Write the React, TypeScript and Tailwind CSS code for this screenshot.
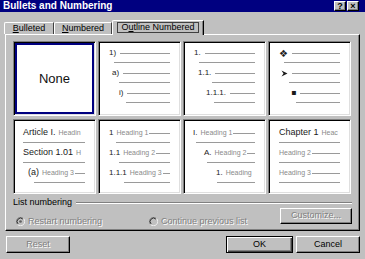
import type { ReactNode } from "react";

type Level = {
  label: ReactNode;
  heading?: string;
  cut?: boolean;
  pad: string;
  sub: string;
};

const raised =
  "border border-t-white border-l-white border-r-black border-b-black shadow-[inset_-1px_-1px_0_#808080]";
const sunken =
  "border border-t-[#808080] border-l-[#808080] border-r-white border-b-white shadow-[inset_1px_1px_0_#000,inset_-1px_-1px_0_#dfdfdf]";
const disabledText = "text-[#808080] [text-shadow:1px_1px_0_#fff]";

const arrowBullet = (
  <svg width="7" height="7" viewBox="0 0 7 7" className="block">
    <path d="M0.5 0.5 L6.5 3.5 L0.5 6.5 L2.5 3.5 Z" fill="#1a1a1a" />
  </svg>
);

const simpleCells: Level[][] = [
  [
    { label: "1)", pad: "pl-[10px]", sub: "ml-[15px]" },
    { label: "a)", pad: "pl-[13px]", sub: "ml-[20px]" },
    { label: "i)", pad: "pl-[20px]", sub: "ml-[27px]" },
  ],
  [
    { label: "1.", pad: "pl-[10px]", sub: "ml-[15px]" },
    { label: "1.1.", pad: "pl-[14px]", sub: "ml-[28px]" },
    { label: "1.1.1.", pad: "pl-[22px]", sub: "ml-[30px]" },
  ],
  [
    { label: <span className="font-['DejaVu_Sans',sans-serif] text-[10px] font-bold">❖</span>, pad: "pl-[10px]", sub: "ml-[15px]" },
    { label: arrowBullet, pad: "pl-[12px]", sub: "ml-[20px]" },
    { label: <span className="font-['DejaVu_Sans',sans-serif] text-[8px]">▪</span>, pad: "pl-[22px]", sub: "ml-[27px]" },
  ],
];

const headingCells: { size: string; levels: Level[] }[] = [
  {
    size: "text-[9px]",
    levels: [
      { label: "Article I.", heading: "Headin", cut: true, pad: "pl-[9px]", sub: "ml-[9px]" },
      { label: "Section 1.01", heading: "H", cut: true, pad: "pl-[9px]", sub: "ml-[9px]" },
      { label: "(a)", heading: "Heading 3", pad: "pl-[14px]", sub: "ml-[20px]" },
    ],
  },
  {
    size: "text-[8px]",
    levels: [
      { label: "1", heading: "Heading 1", pad: "pl-[10px]", sub: "ml-[17px]" },
      { label: "1.1", heading: "Heading 2", pad: "pl-[10px]", sub: "ml-[20px]" },
      { label: "1.1.1", heading: "Heading 3", pad: "pl-[10px]", sub: "ml-[25px]" },
    ],
  },
  {
    size: "text-[8px]",
    levels: [
      { label: "I.", heading: "Heading 1", pad: "pl-[9px]", sub: "ml-[12px]" },
      { label: "A.", heading: "Heading 2", pad: "pl-[20px]", sub: "ml-[23px]" },
      { label: "1.", heading: "Heading", cut: true, pad: "pl-[32px]", sub: "ml-[33px]" },
    ],
  },
  {
    size: "text-[9px]",
    levels: [
      { label: "Chapter 1", heading: "Heac", cut: true, pad: "pl-[10px]", sub: "ml-[10px]" },
      { label: "", heading: "Heading 2", pad: "pl-[10px]", sub: "ml-[10px]" },
      { label: "", heading: "Heading 3", pad: "pl-[10px]", sub: "ml-[10px]" },
    ],
  },
];

function Cell({ levels, top, size = "text-[8px]" }: { levels: Level[]; top: string; size?: string }) {
  return (
    <div className={`bg-white ${sunken} ${top} pr-[10px]`}>
      {levels.map((lv, i) => (
        <div key={i} className="h-[20px]">
          <div className={`flex h-[10px] items-center whitespace-nowrap ${lv.pad}`}>
            {lv.label !== "" && (
              <span className={`shrink-0 text-[#1a1a1a] ${size}`}>{lv.label}</span>
            )}
            {lv.heading && (
              <span
                className={`shrink-0 text-[7px] text-[#8a8a8a] ${lv.label !== "" ? "ml-[3px]" : ""}`}
              >
                {lv.heading}
              </span>
            )}
            {!lv.cut && (
              <div
                className={`h-px min-w-0 flex-1 bg-[#9a9a9a] ${lv.heading ? "ml-[1px]" : "ml-[4px]"}`}
              />
            )}
          </div>
          <div className={`mt-[4px] h-px bg-[#9a9a9a] ${lv.sub}`} />
        </div>
      ))}
    </div>
  );
}

function Radio({ checked }: { checked?: boolean }) {
  return (
    <svg width="9" height="9" viewBox="0 0 12 12" className="shrink-0">
      <circle cx="6" cy="6" r="5.5" fill="#c0c0c0" />
      <path d="M10 2 A5.5 5.5 0 0 0 2 10" stroke="#808080" strokeWidth="1" fill="none" />
      <path d="M9.2 2.8 A4.5 4.5 0 0 0 2.8 9.2" stroke="#000" strokeWidth="1" fill="none" />
      <path d="M2 10 A5.5 5.5 0 0 0 10 2" stroke="#fff" strokeWidth="1" fill="none" />
      {checked && <circle cx="6" cy="6" r="1.8" fill="#606060" />}
    </svg>
  );
}

function TitleButton({ children }: { children: ReactNode }) {
  return (
    <div
      className={`flex h-[10px] w-[12px] items-center justify-center bg-[#c0c0c0] text-[9px] font-bold leading-none text-black ${raised}`}
    >
      {children}
    </div>
  );
}

export default function App() {
  return (
    <div className="flex h-[259px] w-[365px] flex-col overflow-hidden bg-[#c0c0c0] font-['Liberation_Sans',Arial,sans-serif] text-[9px] text-black">
      {/* title bar */}
      <div className="flex h-[12px] items-center bg-[#000080] pl-[3px] pr-[6px]">
        <span className="text-[10px] font-bold leading-none text-white">
          Bullets and Numbering
        </span>
        <div className="ml-auto flex gap-[1px]">
          <TitleButton>?</TitleButton>
          <TitleButton>×</TitleButton>
        </div>
      </div>

      {/* tabs */}
      <div className="relative z-10 flex h-[22px] items-end pl-[4px]">
        <div className="flex h-[12px] w-[50px] items-center justify-center rounded-tl-[2px] border-l border-r border-t border-white border-r-[#404040]">
          <span>
            <u>B</u>ulleted
          </span>
        </div>
        <div className="flex h-[12px] w-[58px] items-center justify-center rounded-tl-[2px] border-l border-r border-t border-white border-r-[#404040]">
          <span>
            <u>N</u>umbered
          </span>
        </div>
        <div className="-mb-px flex h-[15px] w-[92px] items-center justify-center rounded-tl-[2px] border-l border-r border-t border-white border-r-black bg-[#c0c0c0] pb-[1px] shadow-[inset_-1px_0_0_#808080]">
          <span className="border border-[#404040] px-[3px] leading-[9px]">
            O<u>u</u>tline Numbered
          </span>
        </div>
      </div>

      {/* panel */}
      <div className={`ml-[5px] flex h-[197px] w-[355px] flex-col pl-[7px] pr-[7px] pt-[6px] ${raised}`}>
        <div className="grid grid-cols-[83px_83px_83px_83px] grid-rows-[75px_75px] gap-x-[2px] gap-y-[3px]">
          <div className={`bg-white p-[1px] ${sunken}`}>
            <div className="flex h-full items-center justify-center border-2 border-[#000080] text-[13px] text-[#111]">
              None
            </div>
          </div>
          {simpleCells.map((c, i) => (
            <Cell key={i} levels={c} top="pt-[6px]" />
          ))}
          {headingCells.map((c, i) => (
            <Cell key={i} levels={c.levels} size={c.size} top="pt-[8px]" />
          ))}
        </div>

        {/* list numbering group */}
        <div className="mt-[4px] flex h-[10px] items-center">
          <span>List numbering</span>
          <div className="ml-[4px] h-[2px] flex-1 border-b border-t border-b-white border-t-[#808080]" />
        </div>
        <div className="flex items-start">
          <div className={`mt-[7px] flex items-center pl-[3px] ${disabledText}`}>
            <Radio checked />
            <span className="ml-[3px]">Restart numbering</span>
            <div className="ml-[47px]">
              <Radio />
            </div>
            <span className="ml-[3px]">Continue previous list</span>
          </div>
          <div
            className={`ml-auto flex h-[16px] w-[72px] items-center justify-center ${raised} ${disabledText}`}
          >
            Customize...
          </div>
        </div>
      </div>

      {/* dialog buttons */}
      <div className="mt-[5px] flex pl-[6px] pr-[5px]">
        <div className={`flex h-[17px] w-[64px] items-center justify-center ${raised} ${disabledText}`}>
          Reset
        </div>
        <div className="ml-auto flex h-[17px] w-[67px] items-center justify-center border border-black shadow-[inset_1px_1px_0_#fff,inset_-1px_-1px_0_#404040,inset_-2px_-2px_0_#808080]">
          OK
        </div>
        <div className={`ml-[3px] flex h-[17px] w-[64px] items-center justify-center ${raised}`}>
          Cancel
        </div>
      </div>
    </div>
  );
}
